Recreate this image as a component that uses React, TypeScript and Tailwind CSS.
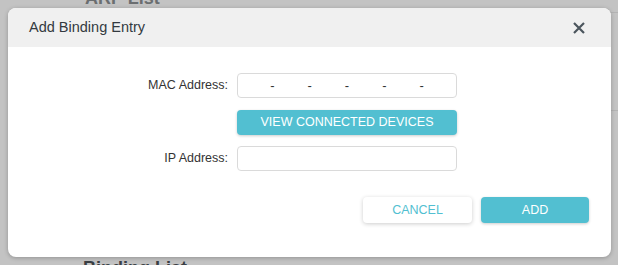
import React from "react";

const font = { fontFamily: '"Liberation Sans", Arial, sans-serif' };

function Dash() {
  return <span className="w-[6px] text-center text-[13px] leading-none text-[#333]">-</span>;
}

export default function App() {
  return (
    <div className="relative h-[265px] w-[618px] overflow-hidden bg-[#c3c3c3]" style={font}>
      {/* page behind the modal */}
      <div className="flex h-full flex-col">
        <div className="ml-[85px] mt-[-12px] text-[18px] font-bold leading-[20px] text-[#6b6e70]">ARP List</div>
        <div className="ml-[600px] mt-[4px] h-px bg-[#b3b3b3]" />
        <div className="ml-[600px] mt-[97px] h-px bg-[#b3b3b3]" />
        <div className="mt-auto mb-[-13px] ml-[83px] text-[18px] font-bold leading-[20px] text-[#3a3f44]">Binding List</div>
      </div>

      {/* modal */}
      <div className="absolute left-[8px] top-[8px] flex h-[249px] w-[603px] flex-col overflow-hidden rounded-[8px] bg-white shadow-[0_1px_4px_rgba(0,0,0,0.25)]">
        <div className="flex h-[39px] items-center justify-between bg-[#f0f0f0] pl-[21px] pr-[26px]">
          <span className="text-[14.5px] text-[#333a40]">Add Binding Entry</span>
          <svg width="12" height="12" viewBox="0 0 12 12" className="text-[#4b555d]">
            <path d="M1 1 L11 11 M11 1 L1 11" stroke="currentColor" strokeWidth="2.2" strokeLinecap="butt" />
          </svg>
        </div>

        <div className="flex flex-1 flex-col pt-[26px]">
          <div className="flex items-center gap-[9px]">
            <div className="w-[220px] text-right text-[12.5px] text-[#333]">MAC Address:</div>
            <div className="flex h-[25px] w-[220px] items-center rounded-[4px] border border-[#dadada] bg-white">
              <span className="flex-1" />
              <Dash />
              <span className="flex-1" />
              <Dash />
              <span className="flex-1" />
              <Dash />
              <span className="flex-1" />
              <Dash />
              <span className="flex-1" />
              <Dash />
              <span className="flex-1" />
            </div>
          </div>

          <div className="mt-[12px] flex gap-[9px]">
            <div className="w-[220px]" />
            <button className="flex h-[25px] w-[220px] items-center justify-center rounded-[4px] bg-[#52bfd1] text-[12.5px] text-white shadow-[0_1px_3px_rgba(0,0,0,0.2)]">
              VIEW CONNECTED DEVICES
            </button>
          </div>

          <div className="mt-[11px] flex items-center gap-[9px]">
            <div className="w-[220px] text-right text-[12.5px] text-[#333]">IP Address:</div>
            <div className="h-[25px] w-[220px] rounded-[4px] border border-[#dadada] bg-white" />
          </div>

          <div className="mt-[26px] flex justify-end gap-[9px] pr-[22px]">
            <button className="flex h-[26px] w-[109px] items-center justify-center rounded-[4px] bg-white text-[12.5px] text-[#52bfd1] shadow-[0_1px_4px_rgba(0,0,0,0.2)]">
              CANCEL
            </button>
            <button className="flex h-[26px] w-[108px] items-center justify-center rounded-[4px] bg-[#52bfd1] text-[12.5px] text-white shadow-[0_1px_3px_rgba(0,0,0,0.2)]">
              ADD
            </button>
          </div>
        </div>
      </div>
    </div>
  );
}
